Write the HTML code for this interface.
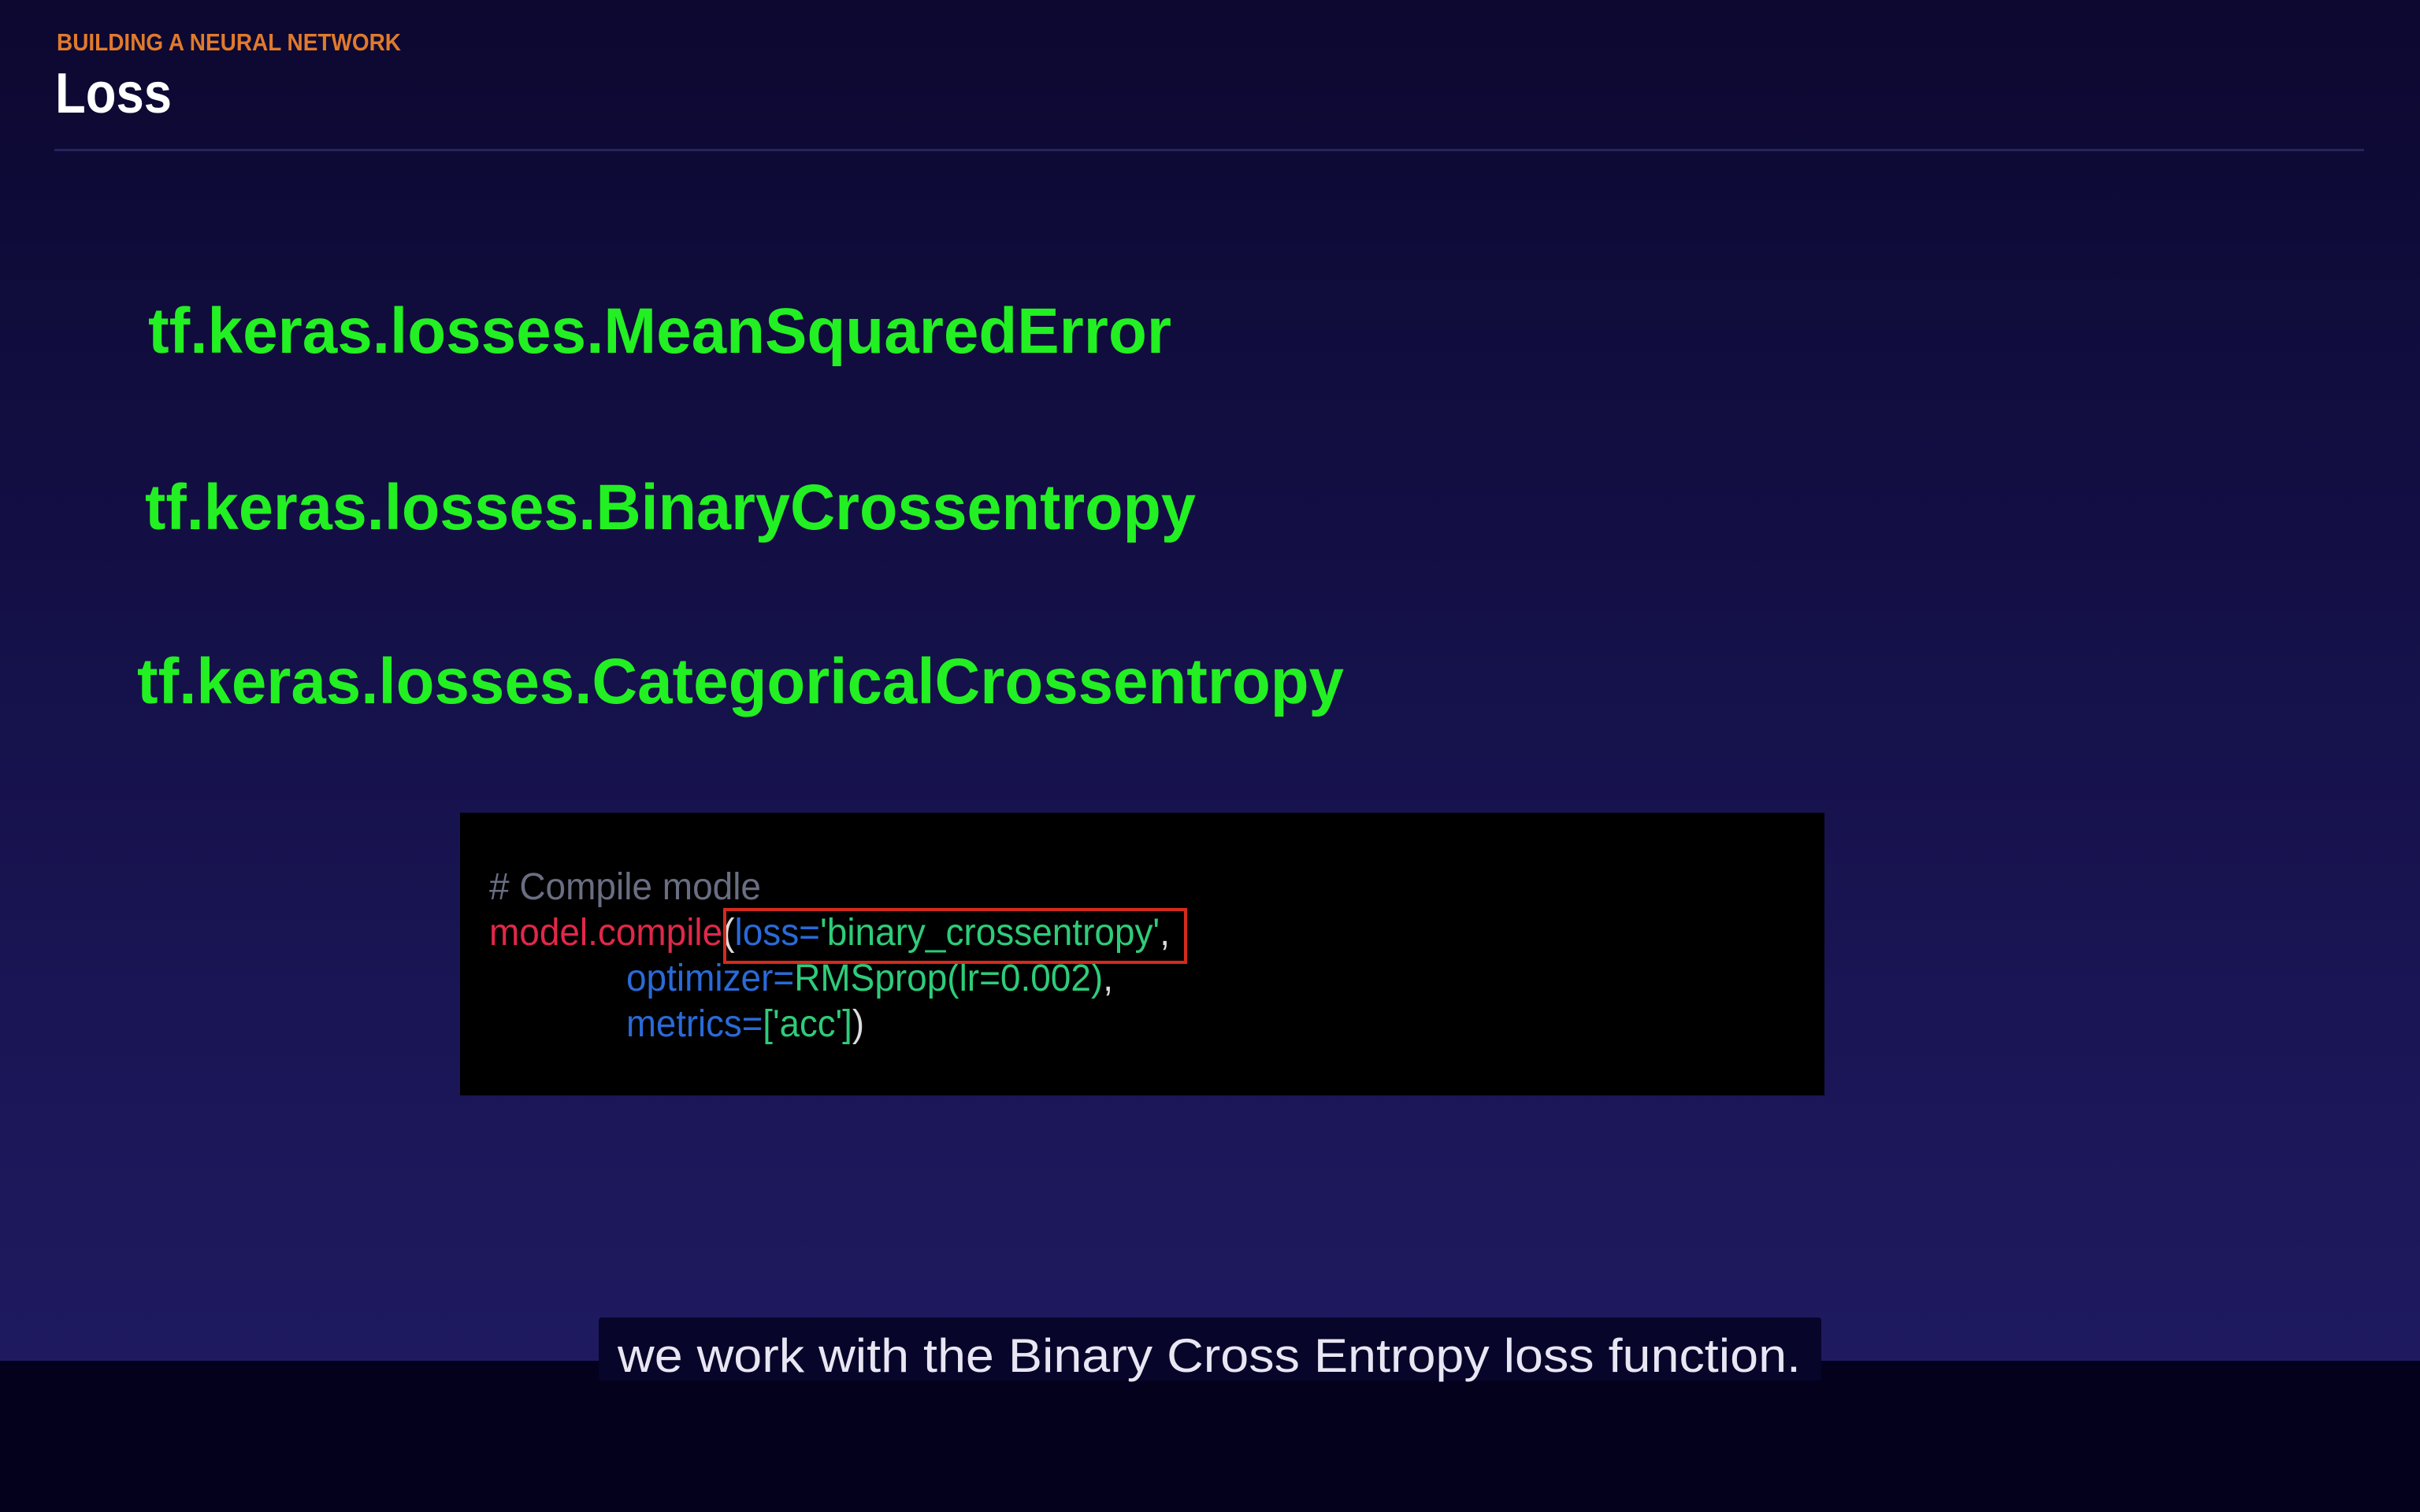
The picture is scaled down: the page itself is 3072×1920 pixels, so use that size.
<!DOCTYPE html>
<html><head><meta charset="utf-8"><style>
html,body{margin:0;padding:0;width:3072px;height:1920px;overflow:hidden;background:#0c0930}
</style></head><body>
<svg width="3072" height="1920" viewBox="0 0 3072 1920" xmlns="http://www.w3.org/2000/svg" style="display:block">
<defs>
<linearGradient id="bg" x1="0" y1="0" x2="0" y2="1">
<stop offset="0" stop-color="#0c0830"/>
<stop offset="0.5" stop-color="#15114a"/>
<stop offset="1" stop-color="#1f1a60"/>
</linearGradient>
</defs>
<rect x="0" y="0" width="3072" height="1728" fill="url(#bg)"/>
<rect x="0" y="1728" width="3072" height="192" fill="#03011c"/>
<g font-family="Liberation Sans, Arial, sans-serif">
<text x="72" y="64" font-size="31" font-weight="bold" fill="#e07a2c" textLength="437" lengthAdjust="spacingAndGlyphs">BUILDING A NEURAL NETWORK</text>
<text x="70" y="143" font-size="72" font-weight="bold" fill="#ffffff" textLength="148" lengthAdjust="spacingAndGlyphs">Loss</text>
<rect x="69" y="189" width="2932" height="3" fill="#27235c"/>
<g font-size="82" font-weight="bold" fill="#22f022">
<text x="188" y="448" textLength="1299" lengthAdjust="spacingAndGlyphs">tf.keras.losses.MeanSquaredError</text>
<text x="184" y="672" textLength="1334" lengthAdjust="spacingAndGlyphs">tf.keras.losses.BinaryCrossentropy</text>
<text x="174" y="893" textLength="1532" lengthAdjust="spacingAndGlyphs">tf.keras.losses.CategoricalCrossentropy</text>
</g>
<rect x="584" y="1032" width="1732" height="359" fill="#000000"/>
<g font-size="48">
<text x="621" y="1142" fill="#6a6e82" textLength="345" lengthAdjust="spacingAndGlyphs"># Compile modle</text>
<text x="621" y="1200" textLength="864" lengthAdjust="spacingAndGlyphs"><tspan fill="#e0284a">model.compile</tspan><tspan fill="#dddddd">(</tspan><tspan fill="#2a6ad8">loss=</tspan><tspan fill="#2ecc7a">'binary_crossentropy'</tspan><tspan fill="#dddddd">,</tspan></text>
<text x="795" y="1258" textLength="618" lengthAdjust="spacingAndGlyphs"><tspan fill="#2a6ad8">optimizer=</tspan><tspan fill="#2ecc7a">RMSprop(lr=0.002)</tspan><tspan fill="#dddddd">,</tspan></text>
<text x="795" y="1316" textLength="302" lengthAdjust="spacingAndGlyphs"><tspan fill="#2a6ad8">metrics=</tspan><tspan fill="#2ecc7a">['acc']</tspan><tspan fill="#dddddd">)</tspan></text>
</g>
<rect x="920" y="1155" width="585" height="67" fill="none" stroke="#d42a1e" stroke-width="4"/>
<rect x="760" y="1673" width="1552" height="80" rx="4" fill="#07052a"/>
<text x="784" y="1742" font-size="60" fill="#e8e6f2" textLength="1502" lengthAdjust="spacingAndGlyphs">we work with the Binary Cross Entropy loss function.</text>
</g>
</svg>
</body></html>
